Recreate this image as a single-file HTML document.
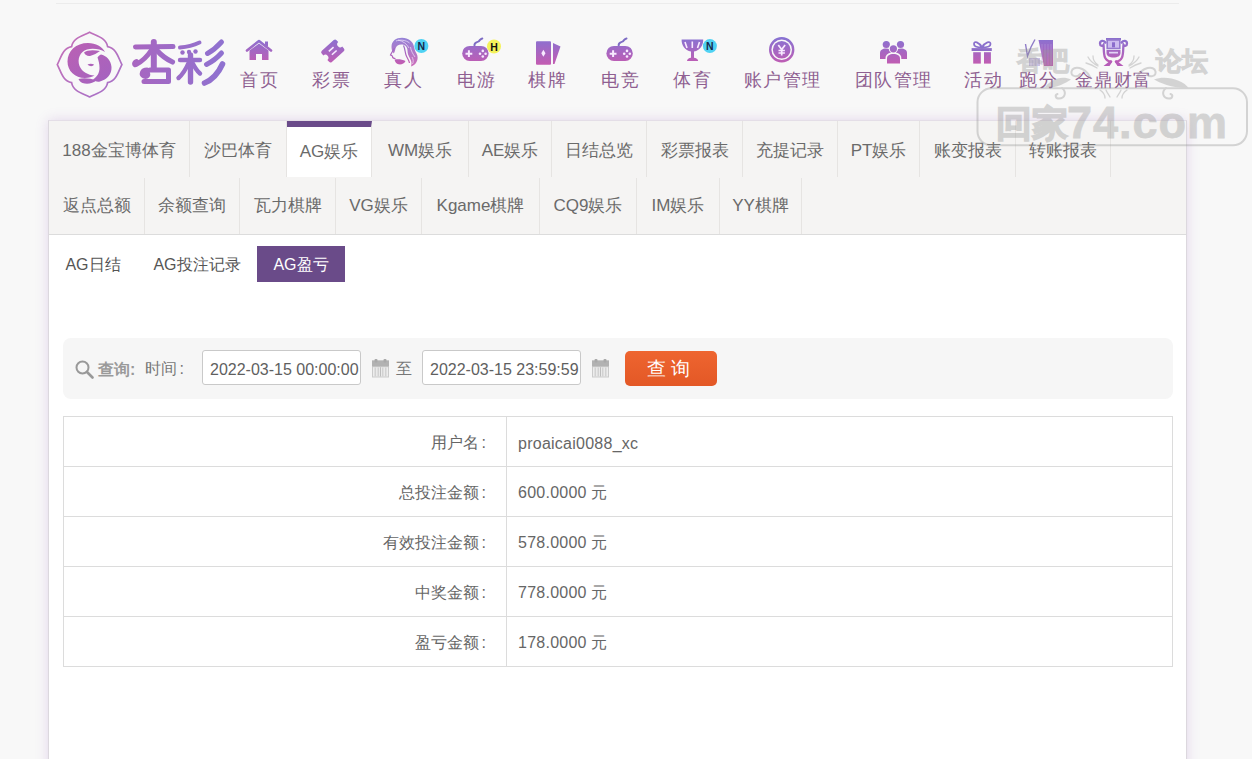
<!DOCTYPE html>
<html><head><meta charset="utf-8">
<style>
*{margin:0;padding:0;box-sizing:border-box}
html,body{width:1252px;height:759px;overflow:hidden}
body{background:#f8f8f8;font-family:"Liberation Sans",sans-serif;color:#666;position:relative}
.topline{position:absolute;left:56px;top:3px;width:1123px;height:1px;background:#ececec}
.nav{position:absolute;top:0;left:0}
.ni{position:absolute;top:69px;font-size:18px;line-height:22px;color:#8f5f91;white-space:nowrap;transform:translateX(-50%);letter-spacing:1.3px;text-indent:1.3px}
.ic{position:absolute}
.panel{position:absolute;left:48px;top:120px;width:1139px;height:660px;background:#fff;border:1px solid #dcd8de;border-top-color:#e4dee7;box-shadow:0 0 12px rgba(145,80,185,.2)}
.tabs{position:absolute;left:0;top:0;width:1137px;height:114px;background:#f5f4f3;border-bottom:1px solid #dcdcdc}
.tab{position:absolute;height:56px;font-size:17px;line-height:56px;color:#6a6a6a;white-space:nowrap;text-align:center;border-right:1px solid #e6e4e2}
.tab.r1{padding-top:4px;line-height:52px}
.tab.on{background:#fff;border-top:6px solid #6a4b8a;line-height:49px;padding-top:0;border-right:1px solid #e6e4e2!important}
.sub{position:absolute;top:125px;padding-top:1px;height:36px;font-size:16px;line-height:36px;color:#555;text-align:center;white-space:nowrap}
.sub.on{background:#6a4b89;color:#fff}
.qbar{position:absolute;left:14px;top:217px;width:1110px;height:61px;background:#f6f6f6;border-radius:8px}
.inp{position:absolute;top:12px;width:159px;height:35px;background:#fff;border:1px solid #c9c9c9;border-radius:3px;font-size:16px;line-height:28px;padding-top:5px;color:#5f5f5f;padding-left:7px;white-space:nowrap}
.tbl{position:absolute;left:14px;top:295px;width:1110px;border-collapse:collapse}
.tbl td{border:1px solid #dcdcdc;height:50px;padding-top:4px;font-size:16px;color:#666;white-space:nowrap}
.tbl td.l{width:443px;text-align:right;padding-right:20px}
.tbl td.r{padding-left:11px;letter-spacing:.25px}
.wm{position:absolute;pointer-events:none}
</style></head><body>
<div class="topline"></div>

<svg style="position:absolute;left:0;top:0" width="1252" height="110" viewBox="0 0 1252 110">
<defs>
<linearGradient id="ig" gradientUnits="userSpaceOnUse" x1="0" y1="38" x2="0" y2="64"><stop offset="0" stop-color="#8872d2"/><stop offset="1" stop-color="#c25cb2"/></linearGradient>
<linearGradient id="lg" gradientUnits="userSpaceOnUse" x1="60" y1="30" x2="120" y2="98"><stop offset="0" stop-color="#c060b0"/><stop offset="1" stop-color="#9d64c4"/></linearGradient>
<linearGradient id="tg" gradientUnits="userSpaceOnUse" x1="133" y1="0" x2="224" y2="0"><stop offset="0" stop-color="#a866c0"/><stop offset="1" stop-color="#8f72d0"/></linearGradient>
</defs>
<!-- logo flower outline -->
<path d="M89.6 32.3 C96.1 35.8 106.1 37.6 107.6 46.6 C116.6 48.1 118.4 58.1 121.9 64.6 C118.4 71.1 116.6 81.1 107.6 82.6 C106.1 91.6 96.1 93.4 89.6 96.9 C83.1 93.4 73.1 91.6 71.6 82.6 C62.6 81.1 60.8 71.1 57.3 64.6 C60.8 58.1 62.6 48.1 71.6 46.6 C73.1 37.6 83.1 35.8 89.6 32.3Z" fill="none" stroke="url(#lg)" stroke-width="1.7" opacity=".9"/>
<path fill="url(#lg)" d="M88 43 C76 43 67.5 51 67.5 61.5 C67.5 71 75 78 85 78 C89 78 92 77 94.5 75.5 C88 75 82 72 79.5 66 C77 59 80 51.5 87 49.5 C93 48 100 49 105 52 C102 46.5 96 43 88 43Z"/>
<path fill="url(#lg)" d="M101 54.5 C106 55.5 111 60 111.5 67 C112 74 107 79.5 100 81.5 C97 82.3 94.5 81 93 79.5 C97 77 99.5 73 99.5 68 C99.5 64 98.5 60 97.5 57.5 C98.5 56 99.5 55 101 54.5Z"/>
<path fill="url(#lg)" d="M84 52.5 C87 50 93 49.5 100 51 C97 53 94 55 90 56 C87.5 56.5 85 55 84 52.5Z"/>
<path fill="url(#lg)" d="M87.5 64.5 C89.5 63.5 92 63.5 94 64.5 C93 66.5 90 67 87.5 64.5Z"/>
<path fill="url(#lg)" d="M78.5 79 C83 77.5 90 78 96.5 80.5 C93 83.5 87 84.5 82.5 83 C80.5 82 79 80.5 78.5 79Z"/>
<g fill="none" stroke="url(#tg)" stroke-linecap="round" stroke-linejoin="round">
<path d="M135.5 47 L173 46.5" stroke-width="5"/>
<path d="M153.8 42 V68" stroke-width="6"/>
<path d="M151.5 50 C147 57 141 62 136 64.5 C134 65.5 134 62.5 136.5 61.5" stroke-width="5"/>
<path d="M156.5 50 C161 55 167 59.5 172.5 62" stroke-width="5.2"/>
<path d="M147 70 C142 70 141 74.5 144 76 C147 77.5 149 74.5 147 73 M144 81.5 H168.5 V70 H150" stroke-width="5"/>
<path d="M199.5 42.5 C193 45.5 186 47 180 47.5" stroke-width="4"/>
<circle cx="182.5" cy="52.5" r="2.2" fill="url(#tg)" stroke="none"/>
<circle cx="189" cy="52" r="2.2" fill="url(#tg)" stroke="none"/>
<circle cx="195.5" cy="51.5" r="2.2" fill="url(#tg)" stroke="none"/>
<path d="M180 60 H200" stroke-width="4.4"/>
<path d="M190.5 55 V82" stroke-width="5.4"/>
<path d="M189 62 C186 69 182 75 178.5 78" stroke-width="4.4"/>
<path d="M192 62 C194.5 67 197 71 200 73.5" stroke-width="4.4"/>
<path d="M221.5 42 C217 47 212 51 207.5 53.5" stroke-width="5"/>
<path d="M221.5 53 C217 58 211.5 62 206.5 64.5" stroke-width="5"/>
<path d="M222.5 64 C218 74 212 80 204.5 83" stroke-width="5.6"/>
</g>

<!-- home 259 -->
<path d="M247 50.5 L259 41 L271 50.5" fill="none" stroke="url(#ig)" stroke-width="2.6" stroke-linecap="round" stroke-linejoin="round"/>
<rect x="265" y="41.5" width="3" height="5" fill="url(#ig)"/>
<path d="M249.5 50.5 L259 43.5 L268.5 50.5 V60 H262 V54 H256 V60 H249.5Z" fill="url(#ig)"/>

<!-- ticket 333 -->
<linearGradient id="tk" gradientUnits="userSpaceOnUse" x1="8.7" y1="-9.66" x2="-8.7" y2="9.66"><stop offset="0" stop-color="#8872d2"/><stop offset="1" stop-color="#c25cb2"/></linearGradient>
<g transform="translate(332.8 51) rotate(-42)">
<path fill="url(#tk)" d="M-8 -7.5 H8 Q10 -7.5 10 -5.5 V-3 A3 3 0 0 0 10 3 V5.5 Q10 7.5 8 7.5 H-8 Q-10 7.5 -10 5.5 V3 A3 3 0 0 0 -10 -3 V-5.5 Q-10 -7.5 -8 -7.5Z"/>
<path d="M-3.2 -2.4 H3.2 M-3.2 2.2 H3.2" stroke="#f6eaff" stroke-width="1.6"/>
</g>

<!-- woman 403 -->
<g>
<g opacity=".88">
<path fill="url(#ig)" d="M391.5 47 C391.5 41 396 37.8 402 37.8 C408.5 37.8 412.8 41.5 413.8 46 C414.5 49 415 51 416.5 53.5 C418 56 418 59.5 416.5 62 C415.5 64 413.5 65.8 411 66.5 C412 63.5 411.5 61 410 58.5 C408.5 56 407.5 53.5 407.5 50.5 C407.5 47.5 405.5 45 402.5 44.5 C399 44 396.5 45.5 395.5 48.5 C395 50.5 394.8 52 393.8 53.5 C392.5 52 391.5 50 391.5 47Z"/>
</g>
<path fill="none" stroke="#efe2fb" stroke-width=".9" opacity=".8" d="M396 41 C400 39.5 406 40 409.5 43 M398 40 C403 41 407 44 409 48 M410.5 47 C411 51 413 54 415 57 M412 57 C413.5 59.5 413.5 62 412.5 64"/>
<path fill="none" stroke="url(#ig)" stroke-width="1.2" d="M394.5 48 C393 50.5 391.5 53 390.5 55 C391.5 55.5 392.5 55.5 392.5 56.5 C392.5 58 394 58.5 395.5 58.5 M403.5 45.5 C405 48.5 405 52 406 55 C407 58 409 60 409.5 63"/>
<path fill="url(#ig)" d="M394.5 59.5 C398.5 58.8 402.5 59.5 405.5 61 C404.5 63.5 401.5 64.8 398.5 64.3 C396.5 64 395 62 394.5 59.5Z"/>
<circle cx="421.4" cy="46" r="7" fill="#4fd2f3"/>
<text x="421.4" y="50" font-size="10.5" font-weight="bold" fill="#15284a" text-anchor="middle">N</text>
</g>

<!-- gamepad 475 -->
<g id="gp">
<path d="M474.5 45.5 C474 42 477 42.5 478.5 41.5 C480 40.5 480 39 482.3 38.5" fill="none" stroke="#7d6cc4" stroke-width="2" stroke-linecap="round"/>
<rect x="462.2" y="45.9" width="26.4" height="15" rx="7.5" fill="url(#ig)"/>
<path d="M465.5 53.7 H472.3 M468.9 50.3 V57.1" stroke="#f8eaff" stroke-width="2"/>
<circle cx="480" cy="53.7" r="1.3" fill="#f8eaff"/><circle cx="485.6" cy="53.7" r="1.3" fill="#f8eaff"/>
<circle cx="482.8" cy="50.9" r="1.3" fill="#f8eaff"/><circle cx="482.8" cy="56.5" r="1.3" fill="#f8eaff"/>
</g>
<circle cx="494" cy="46.5" r="7" fill="#f4f25c"/>
<text x="494" y="50.5" font-size="10.5" font-weight="bold" fill="#111" text-anchor="middle">H</text>

<!-- cards 547 -->
<rect x="536" y="41.2" width="15" height="23.5" rx="1" fill="url(#ig)"/>
<path d="M553 43 L560.5 46.5 L554.5 64 L553 64Z" fill="url(#ig)"/>
<path d="M543.4 49.8 L545.5 53.3 L543.4 56.8 L541.3 53.3Z" fill="#f8eaff"/>

<!-- gamepad 2 620 -->
<g transform="translate(144.2 0)">
<path d="M474.5 45.5 C474 42 477 42.5 478.5 41.5 C480 40.5 480 39 482.3 38.5" fill="none" stroke="#7d6cc4" stroke-width="2" stroke-linecap="round"/>
<rect x="462.2" y="45.9" width="26.4" height="15" rx="7.5" fill="url(#ig)"/>
<path d="M465.5 53.7 H472.3 M468.9 50.3 V57.1" stroke="#f8eaff" stroke-width="2"/>
<circle cx="480" cy="53.7" r="1.3" fill="#f8eaff"/><circle cx="485.6" cy="53.7" r="1.3" fill="#f8eaff"/>
<circle cx="482.8" cy="50.9" r="1.3" fill="#f8eaff"/><circle cx="482.8" cy="56.5" r="1.3" fill="#f8eaff"/>
</g>

<!-- trophy 692 -->
<path fill="url(#ig)" d="M681.6 39.4 H703.2 C703.5 45 700 50.5 694 51.5 V57.8 C696 58 698.2 59 698.2 61 H687 C687 59 689 58 691 57.8 V51.5 C685 50.5 681.3 45 681.6 39.4Z"/>
<path d="M685 42 L687 48 M699.5 42 L697.5 48 M692.3 41.5 V48" stroke="#f8eaff" stroke-width="1.6"/>
<circle cx="709.9" cy="46.1" r="7" fill="#4fd2f3"/>
<text x="709.9" y="50.1" font-size="10.5" font-weight="bold" fill="#15284a" text-anchor="middle">N</text>

<!-- coin 782 -->
<circle cx="781.7" cy="49.8" r="11.5" fill="none" stroke="url(#ig)" stroke-width="2.4"/>
<circle cx="781.7" cy="49.8" r="8.8" fill="url(#ig)"/>
<path d="M778.3 45 L781.7 49.5 L785.1 45 M781.7 49.5 V55.5 M778.5 50.5 H784.9 M778.5 53 H784.9" fill="none" stroke="#f8eaff" stroke-width="1.7"/>

<!-- people 893 -->
<circle cx="886.3" cy="44.5" r="3.6" fill="url(#ig)"/>
<circle cx="900.5" cy="44.5" r="3.6" fill="url(#ig)"/>
<path d="M880 59 V53 C880 50 882.5 48.5 886 48.5 C889.5 48.5 891 50 891 52 V59Z" fill="url(#ig)"/>
<path d="M896 59 V52 C896 50 897.5 48.5 901 48.5 C904.5 48.5 907 50 907 53 V59Z" fill="url(#ig)"/>
<circle cx="893.4" cy="48.8" r="4.6" fill="#f8f8f8"/>
<path d="M885.5 64.5 V58 C885.5 54.5 888.5 52.5 893.4 52.5 C898.3 52.5 901.3 54.5 901.3 58 V64.5Z" fill="#f8f8f8"/>
<circle cx="893.4" cy="48.8" r="3.6" fill="url(#ig)"/>
<path d="M887 63.4 V58.5 C887 55.5 889.5 54 893.4 54 C897.3 54 900 55.5 900 58.5 V63.4Z" fill="url(#ig)"/>

<!-- gift 983 -->
<path d="M982 47.5 C979 42 974 40.5 974 44 C974 46.5 977.5 47.5 982 47.5 C986.5 47.5 990.5 46.5 990.5 44 C990.5 40.5 985 42 982 47.5Z" fill="none" stroke="#8a70cc" stroke-width="1.8"/>
<rect x="971.6" y="48.1" width="20.2" height="2.9" fill="#8e6ec8"/>
<rect x="973.2" y="52.2" width="7.6" height="11.4" fill="url(#ig)"/>
<rect x="984" y="52.2" width="6.9" height="11.4" fill="url(#ig)"/>

<!-- paofen 1038 -->
<path d="M1025.5 44 L1027.5 56 L1031 47 L1035 39.5" stroke="#8f7cc8" stroke-width="1.4" fill="none"/>
<path d="M1038.5 40 H1053 V66 H1044Z" fill="url(#ig)"/>
<path d="M1042 44v21M1045 44v21M1048 44v21M1051 44v21" stroke="#b9a4e0" stroke-width=".8" opacity=".6"/>
<path d="M1029 58 H1040 V66 H1029Z" fill="#a48fcf" opacity=".55"/>
<path d="M1031 59v7M1034 59v7M1037 59v7" stroke="#f0e8f8" stroke-width=".8"/>

<!-- ding 1113 -->
<rect x="1106" y="38" width="15" height="2.2" fill="#8c70cc"/>
<rect x="1107.2" y="40" width="12.6" height="8.5" fill="#cdbcf0" stroke="#967acf" stroke-width="1.6"/>
<rect x="1112" y="42.3" width="3" height="5" fill="#8a6ccc"/>
<path d="M1106.5 50 H1120.5 V53 C1120.5 56 1117.5 57.5 1113.5 57.5 C1109.5 57.5 1106.5 56 1106.5 53Z" fill="url(#ig)"/>
<path d="M1109 51.8 H1118 V53.5 H1109Z" fill="#e2d4f6"/>
<path d="M1105.5 42.5 C1103.5 40 1100 40.5 1100 43.5 C1100 46 1102.5 46.5 1103.5 45 C1104 49 1103.5 54 1105 57.5 C1106.5 60.5 1109 61.5 1111 61.5" fill="none" stroke="url(#ig)" stroke-width="2.3" stroke-linecap="round"/>
<path d="M1121.5 42.5 C1123.5 40 1127 40.5 1127 43.5 C1127 46 1124.5 46.5 1123.5 45 C1123 49 1123.5 54 1122 57.5 C1120.5 60.5 1118 61.5 1116 61.5" fill="none" stroke="url(#ig)" stroke-width="2.3" stroke-linecap="round"/>
<path d="M1110.5 60.5 L1103.5 66 H1109.5 L1112.5 61.5Z M1116.5 60.5 L1123.5 66 H1117.5 L1114.5 61.5Z" fill="#b65cb8"/>
</svg>

<!-- nav -->
<div class="ni" style="left:259px">首页</div>
<div class="ni" style="left:331px">彩票</div>
<div class="ni" style="left:403px">真人</div>
<div class="ni" style="left:476px">电游</div>
<div class="ni" style="left:547px">棋牌</div>
<div class="ni" style="left:620px">电竞</div>
<div class="ni" style="left:692px">体育</div>
<div class="ni" style="left:782px">账户管理</div>
<div class="ni" style="left:893px">团队管理</div>
<div class="ni" style="left:983px">活动</div>
<div class="ni" style="left:1038px">跑分</div>
<div class="ni" style="left:1113px">金鼎财富</div>

<div class="panel">
 <div class="tabs">
  <div class="tab r1" style="left:0;top:0;width:141px">188金宝博体育</div>
  <div class="tab r1" style="left:141px;top:0;width:97px">沙巴体育</div>
  <div class="tab r1 on" style="left:238px;top:0;width:85px;border-right:0">AG娱乐</div>
  <div class="tab r1" style="left:323px;top:0;width:97px">WM娱乐</div>
  <div class="tab r1" style="left:420px;top:0;width:83px">AE娱乐</div>
  <div class="tab r1" style="left:503px;top:0;width:95px">日结总览</div>
  <div class="tab r1" style="left:598px;top:0;width:96px">彩票报表</div>
  <div class="tab r1" style="left:694px;top:0;width:95px">充提记录</div>
  <div class="tab r1" style="left:789px;top:0;width:82px">PT娱乐</div>
  <div class="tab r1" style="left:871px;top:0;width:96px">账变报表</div>
  <div class="tab r1" style="left:967px;top:0;width:95px">转账报表</div>

  <div class="tab" style="left:0;top:57px;width:96px">返点总额</div>
  <div class="tab" style="left:96px;top:57px;width:95px">余额查询</div>
  <div class="tab" style="left:191px;top:57px;width:96px">瓦力棋牌</div>
  <div class="tab" style="left:287px;top:57px;width:86px">VG娱乐</div>
  <div class="tab" style="left:373px;top:57px;width:118px">Kgame棋牌</div>
  <div class="tab" style="left:491px;top:57px;width:97px">CQ9娱乐</div>
  <div class="tab" style="left:588px;top:57px;width:83px">IM娱乐</div>
  <div class="tab" style="left:671px;top:57px;width:82px">YY棋牌</div>
 </div>

 <div class="sub" style="left:0;width:88px">AG日结</div>
 <div class="sub" style="left:88px;width:120px">AG投注记录</div>
 <div class="sub on" style="left:208px;width:88px">AG盈亏</div>

 <div class="qbar">
  <svg class="ic" style="left:12px;top:22px" width="19" height="19" viewBox="0 0 19 19"><circle cx="7.5" cy="7.5" r="6" fill="none" stroke="#999" stroke-width="2"/><path d="M12 12 L17.5 17.5" stroke="#999" stroke-width="2.6" stroke-linecap="round"/></svg>
  <div style="position:absolute;left:35px;top:21px;font-size:16px;line-height:22px;color:#9a9a9a;font-weight:bold">查询<span style="margin-left:0">:</span></div>
  <div style="position:absolute;left:82px;top:20px;font-size:16px;line-height:22px;color:#777">时间<span style="margin-left:2.5px">:</span></div>
  <div class="inp" style="left:139px">2022-03-15 00:00:00</div>
  <svg class="ic" style="left:309px;top:21px" width="17" height="19" viewBox="0 0 17 19"><rect x="0" y="1.5" width="17" height="17" fill="#cbcbcb"/><rect x="0" y="1.5" width="17" height="5.8" fill="#b2b2b2"/><rect x="1" y="8.2" width="15" height="9.3" fill="#ededed"/><path d="M3.3 8.5v9M6.3 8.5v9M10.7 8.5v9M13.7 8.5v9" stroke="#d2d2d2" stroke-width="1.6"/><path d="M8.5 8.2v9.3" stroke="#bdbdbd" stroke-width="1"/><rect x="2.5" y="0" width="3" height="3.5" rx="1" fill="#a9a9a9"/><rect x="11.5" y="0" width="3" height="3.5" rx="1" fill="#a9a9a9"/></svg>
  <div style="position:absolute;left:333px;top:20px;font-size:16px;line-height:22px;color:#777">至</div>
  <div class="inp" style="left:359px">2022-03-15 23:59:59</div>
  <svg class="ic" style="left:529px;top:21px" width="17" height="19" viewBox="0 0 17 19"><rect x="0" y="1.5" width="17" height="17" fill="#cbcbcb"/><rect x="0" y="1.5" width="17" height="5.8" fill="#b2b2b2"/><rect x="1" y="8.2" width="15" height="9.3" fill="#ededed"/><path d="M3.3 8.5v9M6.3 8.5v9M10.7 8.5v9M13.7 8.5v9" stroke="#d2d2d2" stroke-width="1.6"/><path d="M8.5 8.2v9.3" stroke="#bdbdbd" stroke-width="1"/><rect x="2.5" y="0" width="3" height="3.5" rx="1" fill="#a9a9a9"/><rect x="11.5" y="0" width="3" height="3.5" rx="1" fill="#a9a9a9"/></svg>
  <div style="position:absolute;left:562px;top:13px;width:92px;height:35px;border-radius:5px;background:linear-gradient(#ee6530,#e35826);color:#fff;font-size:19px;line-height:35px;text-align:center;letter-spacing:0;padding-right:5px">查 询</div>
 </div>

 <table class="tbl">
  <tr><td class="l">用户名<span style="margin-left:2.5px">:</span></td><td class="r">proaicai0088_xc</td></tr>
  <tr><td class="l">总投注金额<span style="margin-left:2.5px">:</span></td><td class="r">600.0000 元</td></tr>
  <tr><td class="l">有效投注金额<span style="margin-left:2.5px">:</span></td><td class="r">578.0000 元</td></tr>
  <tr><td class="l">中奖金额<span style="margin-left:2.5px">:</span></td><td class="r">778.0000 元</td></tr>
  <tr><td class="l">盈亏金额<span style="margin-left:2.5px">:</span></td><td class="r">178.0000 元</td></tr>
 </table>
</div>


<svg style="position:absolute;left:0;top:0;z-index:10;pointer-events:none" width="1252" height="160" viewBox="0 0 1252 160">
<g opacity=".37">
<g fill="#969696" stroke="#969696" font-family="Liberation Sans, sans-serif" font-weight="bold">
<text x="1017" y="70" font-size="26" stroke-width="1">香吧</text>
<text x="1155.5" y="70" font-size="26" stroke-width="1">论坛</text>
<text x="996" y="136" font-size="36" stroke-width="1.6">回家</text>
<text x="1067" y="138" font-size="45" letter-spacing="1" stroke-width=".8">74.com</text>
</g>
<rect x="977.5" y="88.3" width="269.5" height="57" rx="14" fill="none" stroke="#969696" stroke-width="2"/>
<g fill="none" stroke="#969696" stroke-width="2" stroke-linecap="round">
<path d="M1062 88 C1067 92 1065 98.5 1059 98.5 C1055.5 98.5 1054.5 95 1057.5 94"/>
<path d="M1090 77 C1085 67 1073 65 1071.5 71.5 C1070.5 76.5 1078 78 1080 74"/>
<path d="M1166 88 C1161 92 1163 98.5 1169 98.5 C1172.5 98.5 1173.5 95 1170.5 94"/>
<path d="M1137 77 C1142 67 1154 65 1155.5 71.5 C1156.5 76.5 1149 78 1147 74"/>
</g>
<g fill="none" stroke="#969696" stroke-width="1.3" stroke-linecap="round">
<path d="M1088 57 C1090 61 1094 64 1098 66 M1093 56 C1093 60 1095 63 1098 65 M1086 63 C1090 64 1094 66 1097 68"/>
<path d="M1139 57 C1137 61 1133 64 1129 66 M1134 56 C1134 60 1132 63 1129 65 M1141 63 C1137 64 1133 66 1130 68"/>
<path d="M1100 90 C1103 92 1105 95 1105 98 M1106 90 C1107 93 1109 95 1110 97 M1127 90 C1124 92 1122 95 1122 98 M1121 90 C1120 93 1118 95 1117 97"/>
</g>
<g fill="#969696">
<path d="M1044 88.5 C1050 80 1061 75 1071 79.5 C1066 83 1058 87.5 1044 88.5Z"/>
<path d="M1189 88.5 C1183 80 1166 75 1154 79.5 C1160 83 1170 87.5 1189 88.5Z"/>
</g>
</g>
</svg>
</body></html>
